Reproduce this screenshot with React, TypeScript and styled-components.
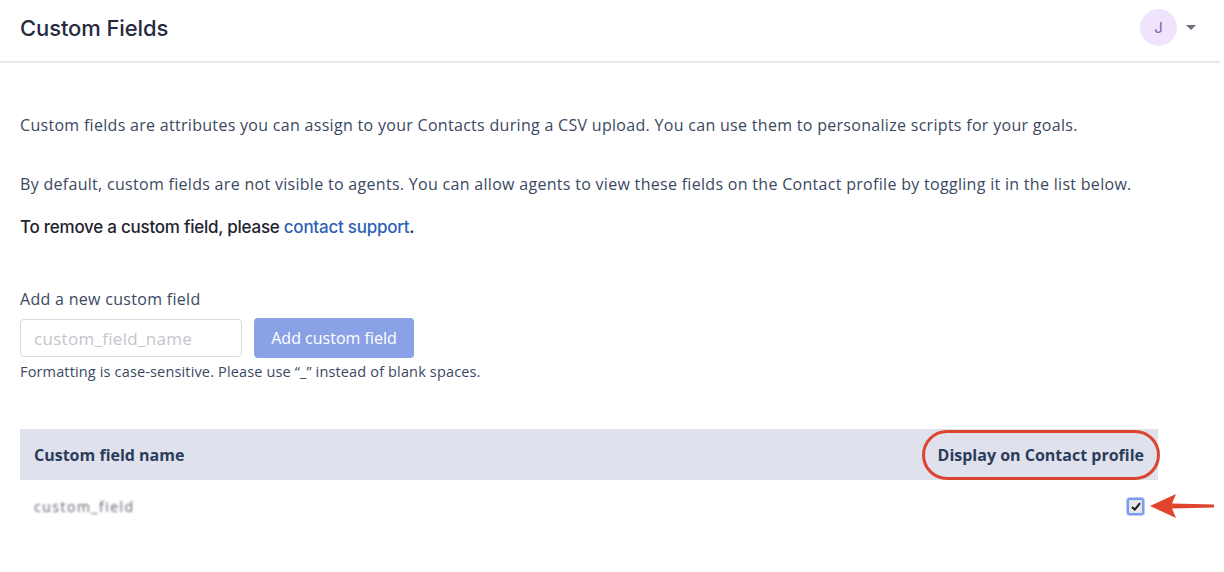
import styled, { createGlobalStyle } from 'styled-components';

const GlobalStyle = createGlobalStyle`
  body {
    margin: 0;
    background: #ffffff;
    font-family: 'Open Sans', 'Roboto', sans-serif;
  }
`;

export default function App(): JSX.Element {
  return (
    <>
      <GlobalStyle />
      <Page>
        <Header>
          <Title>Custom Fields</Title>
          <UserMenu>
            <Avatar>J</Avatar>
            <Caret />
          </UserMenu>
        </Header>
        <Main>
          <Paragraph>
            Custom fields are attributes you can assign to your Contacts during a CSV upload. You can
            use them to personalize scripts for your goals.
          </Paragraph>
          <Paragraph $top={39}>
            By default, custom fields are not visible to agents. You can allow agents to view these
            fields on the Contact profile by toggling it in the list below.
          </Paragraph>
          <Notice>
            To remove a custom field, please <SupportLink href='#'>contact support</SupportLink>.
          </Notice>
          <FieldLabel>Add a new custom field</FieldLabel>
          <FormRow>
            <TextInput placeholder='custom_field_name' />
            <AddButton>Add custom field</AddButton>
          </FormRow>
          <Hint>Formatting is case-sensitive. Please use “_” instead of blank spaces.</Hint>
          <Table>
            <HeadRow>
              <HeadCell>Custom field name</HeadCell>
              <HighlightCell>Display on Contact profile</HighlightCell>
            </HeadRow>
            <BodyRow>
              <Redacted>custom_field</Redacted>
              <CheckBox>
                <svg width='10' height='9' viewBox='0 0 10 9'>
                  <path d='M1 5 L3.8 7.6 L9 1.2' fill='none' stroke='#1b1b1b' strokeWidth='2' />
                </svg>
              </CheckBox>
              <Arrow width='66' height='26' viewBox='0 0 66 26'>
                <path d='M0 13 L26 1 L22 10.5 L64 11.6 L64 14.4 L22 15.5 L26 25 Z' fill='#e0442c' />
              </Arrow>
            </BodyRow>
          </Table>
        </Main>
      </Page>
    </>
  );
}

const Page = styled.div`
  width: 1220px;
  min-height: 572px;
`;

const Header = styled.header`
  height: 63px;
  border-bottom: 2px solid #e6e8ec;
  display: flex;
  align-items: center;
  justify-content: space-between;
  padding: 0 20px;
  box-sizing: border-box;
`;

const Title = styled.h1`
  margin: 0 0 6px;
  font-family: 'Inter', sans-serif;
  font-size: 22px;
  font-weight: 500;
  letter-spacing: -0.1px;
  color: #282a3e;
`;

const UserMenu = styled.div`
  display: flex;
  align-items: center;
  gap: 9px;
  margin-right: 4px;
  margin-bottom: 6px;
`;

const Avatar = styled.div`
  width: 37px;
  height: 37px;
  border-radius: 50%;
  background: #f0e4fc;
  color: #8b5bb8;
  font-family: 'Inter', sans-serif;
  font-size: 15px;
  display: flex;
  align-items: center;
  justify-content: center;
`;

const Caret = styled.span`
  width: 0;
  height: 0;
  border-left: 5px solid transparent;
  border-right: 5px solid transparent;
  border-top: 5px solid #6b6e78;
`;

const Main = styled.main`
  padding: 52px 20px 0;
`;

const Paragraph = styled.p<{ $top?: number }>`
  margin: ${(p) => p.$top ?? 0}px 0 0;
  font-size: 16px;
  line-height: 20px;
  letter-spacing: 0.3px;
  color: #3b4862;
`;

const Notice = styled.p`
  margin: 23px 0 0;
  font-family: 'Inter', sans-serif;
  font-size: 17px;
  font-weight: 500;
  letter-spacing: -0.25px;
  line-height: 20px;
  color: #1f2330;
`;

const SupportLink = styled.a`
  color: #2e5fb4;
  text-decoration: none;
`;

const FieldLabel = styled.div`
  margin-top: 52px;
  font-size: 16px;
  line-height: 20px;
  letter-spacing: 0.3px;
  color: #3b4862;
`;

const FormRow = styled.div`
  display: flex;
  align-items: center;
  gap: 12px;
  margin-top: 9px;
`;

const TextInput = styled.input`
  width: 222px;
  height: 38px;
  box-sizing: border-box;
  border: 1px solid #d7dade;
  border-radius: 4px;
  padding: 0 13px;
  font-family: 'Open Sans', sans-serif;
  font-size: 17px;
  letter-spacing: 0.3px;
  outline: none;
  &::placeholder {
    color: #c3c6cc;
  }
`;

const AddButton = styled.button`
  width: 160px;
  height: 40px;
  border: none;
  border-radius: 4px;
  background: #8aa2e5;
  color: #ffffff;
  font-family: 'Open Sans', sans-serif;
  font-size: 16px;
`;

const Hint = styled.div`
  margin-top: 5px;
  font-size: 14.5px;
  line-height: 18px;
  letter-spacing: 0.15px;
  color: #3b4862;
`;

const Table = styled.div`
  width: 1138px;
  margin-top: 48px;
`;

const HeadRow = styled.div`
  height: 51px;
  background: #dfe1ec;
  display: flex;
  align-items: center;
  justify-content: space-between;
  padding-left: 14px;
  box-sizing: border-box;
`;

const HeadCell = styled.div`
  font-size: 16px;
  font-weight: 700;
  color: #2b3c5c;
`;

const HighlightCell = styled(HeadCell)`
  height: 50px;
  box-sizing: border-box;
  display: flex;
  align-items: center;
  padding: 0 13px;
  margin-right: -2px;
  border: 3px solid #dc4430;
  border-radius: 25px;
`;

const BodyRow = styled.div`
  position: relative;
  height: 52px;
  display: flex;
  align-items: center;
  justify-content: space-between;
  padding: 0 14px;
`;

const Redacted = styled.span`
  font-size: 14px;
  color: #5f6570;
  filter: blur(1px);
  letter-spacing: 1.5px;
`;

const CheckBox = styled.span`
  width: 13px;
  height: 13px;
  border: 2px solid #7b9cec;
  border-radius: 3px;
  background: #e6e7ea;
  box-shadow: 0 0 0 1px #b9cbf5;
  display: flex;
  align-items: center;
  justify-content: center;
`;

const Arrow = styled.svg`
  position: absolute;
  left: 1130px;
  top: 13px;
`;
